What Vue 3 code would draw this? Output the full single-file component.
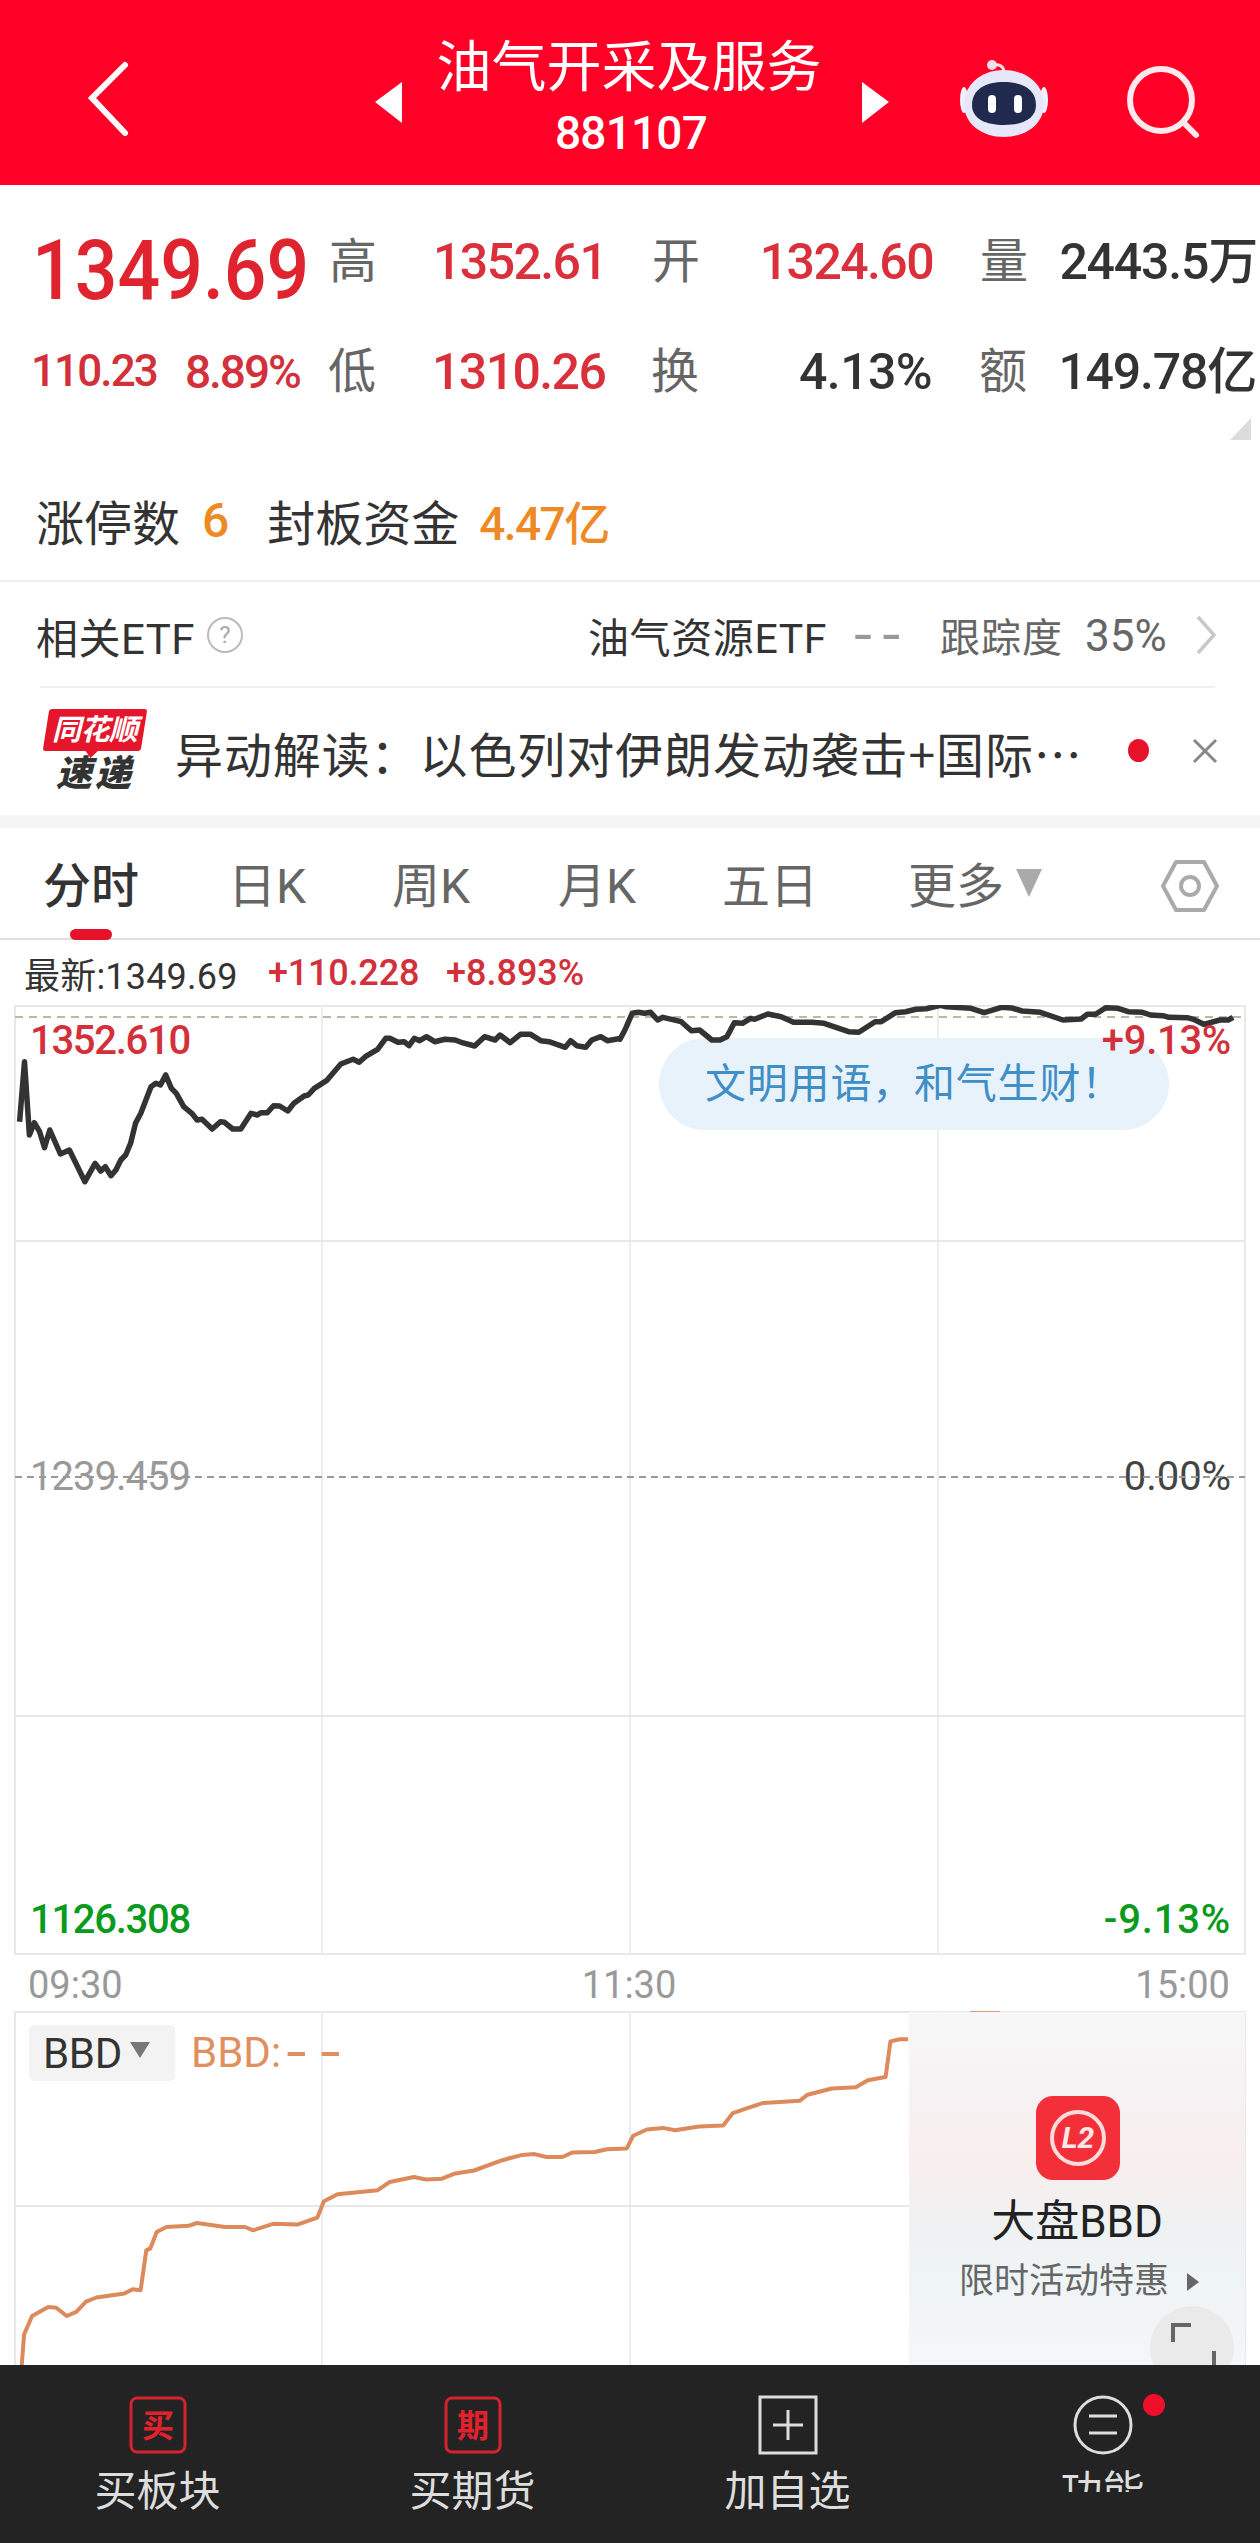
<script setup>
const z5 = [[48,395],[60,215],[72,435],[84,398],[97,425],[109,473],[122,420],[148,492],[170,480],[208,575],[233,520],[247,543],[258,530],[272,557],[284,540],[296,510],[308,495],[320,460],[332,400],[345,370],[370,290],[382,280],[393,285],[406,255],[420,295],[432,310],[450,350],[470,370],[483,390],[495,388],[520,417],[540,395],[550,397],[570,417],[590,417],[615,370],[630,375],[640,368],[655,368],[670,347],[685,348],[705,363],[720,340],[745,318],[755,315],[770,295],[800,272],[835,222],[865,208],[880,217],[895,200],[925,178],[945,145],[955,145],[975,157],[990,155],[1002,167],[1015,145],[1028,152],[1045,140],[1065,155],[1090,148],[1115,150],[1130,157],[1163,168],[1187,140],[1213,150],[1225,135],[1250,158],[1275,133],[1300,133],[1325,152],[1345,155],[1385,172],[1398,152],[1413,167],[1435,172],[1450,150],[1472,140],[1488,152],[1515,146]]
const z6 = [[0,178],[12,150],[30,100],[45,97],[60,100],[75,97],[92,120],[105,112],[150,125],[175,152],[195,150],[225,180],[245,180],[262,170],[280,128],[300,130],[320,115],[330,118],[362,102],[395,110],[425,127],[470,127],[500,130],[560,155],[585,157],[625,125],[640,125],[675,98],[700,95],[725,88],[750,86],[785,76],[800,80],[860,85],[892,98],[935,82],[960,84],[985,93],[1030,97],[1085,120],[1130,117],[1145,103],[1165,103],[1190,83],[1220,85],[1245,95],[1280,97],[1300,105],[1330,107],[1345,112],[1390,113],[1405,118],[1430,133],[1470,120],[1490,120],[1502,112]]
const z4 = [[27,1136],[30,1060],[40,1015],[60,993],[70,995],[83,1015],[95,1005],[107,980],[120,970],[155,960],[165,950],[175,952],[182,855],[187,850],[195,810],[207,798],[235,795],[245,788],[280,798],[305,798],[315,806],[340,790],[370,792],[395,775],[403,735],[420,718],[470,708],[485,688],[515,676],[530,682],[550,680],[565,668],[590,660],[625,635],[650,622],[665,620],[680,627],[700,627],[712,616],[740,615],[755,608],[780,606],[788,575],[805,560],[825,556],[840,562],[870,553],[900,550],[912,520],[930,508],[950,495],[995,490],[1005,475],[1035,460],[1065,457],[1080,440],[1102,432],[1108,345],[1120,340],[1130,340]]
const fmt = (x, y) => `${x.toFixed(1)},${y.toFixed(1)}`
const priceLine = [
  ...z5.map(([x, y]) => fmt(x / 2.45, 990 + y / 3)),
  ...z6.map(([x, y]) => fmt(620 + x / 2.45, 980 + y / 3)),
].join(' ')
const bbdLine = z4.map(([x, y]) => fmt(x / 1.2444, 1900 + y / 2.44)).join(' ')
const vLines = [322, 630, 938]
const hLines = [1241, 1716]
const tabs = [
  { label: '日K', w: 75, x: 228 },
  { label: '周K', w: 78, x: 392 },
  { label: '月K', w: 79, x: 558 },
  { label: '五日', w: 88, x: 722 },
]
</script>

<template>
  <div class="page">
    <header class="top">
      <svg class="back" width="44" height="78" viewBox="0 0 44 78"><path d="M38 5 L5 38 L38 73" fill="none" stroke="#fff" stroke-width="6" stroke-linecap="round" stroke-linejoin="miter"/></svg>
      <svg class="tri-l" width="28" height="42" viewBox="0 0 28 42"><path d="M27 0 L0 20 L27 41 Z" fill="#fff"/></svg>
      <div class="title">
        <div class="name">油气开采及服务</div>
        <div class="code">881107</div>
      </div>
      <svg class="tri-r" width="28" height="42" viewBox="0 0 28 42"><path d="M0 0 L27 20 L0 41 Z" fill="#fff"/></svg>
      <svg class="robot" width="88" height="80" viewBox="0 0 88 80">
        <path d="M44 14 C44 6 38 5 33 6" fill="none" stroke="#f6dfe6" stroke-width="3"/>
        <circle cx="32" cy="6" r="5" fill="#f4dde4"/>
        <ellipse cx="4" cy="41" rx="4" ry="13" fill="#eef0fb"/>
        <ellipse cx="84" cy="41" rx="4" ry="13" fill="#eef0fb"/>
        <path d="M44 11 C68 11 84 27 84 45 C84 65 66 78 44 78 C22 78 4 65 4 45 C4 27 20 11 44 11 Z" fill="#e6e8fa"/>
        <path d="M44 23 C62 23 76 30 76 46 C76 60 62 66 44 66 C26 66 12 60 12 46 C12 30 26 23 44 23 Z" fill="#1f2a4e"/>
        <rect x="28" y="36" width="8" height="18" rx="4" fill="#fff"/>
        <rect x="54" y="36" width="8" height="18" rx="4" fill="#fff"/>
      </svg>
      <svg class="search" width="76" height="80" viewBox="0 0 76 80"><circle cx="35" cy="35" r="31" fill="none" stroke="#ffe9ec" stroke-width="6"/><path d="M57 57 L70 70" stroke="#ffe9ec" stroke-width="6" stroke-linecap="round"/></svg>
    </header>

    <section class="stats">
      <div class="row r1">
        <div class="price"><span>1349.69</span></div>
        <div class="cell c1"><span class="lab">高</span><span class="val red">1352.61</span></div>
        <div class="cell c2"><span class="lab">开</span><span class="val red">1324.60</span></div>
        <div class="cell c3"><span class="lab">量</span><span class="val dark">2443.5万</span></div>
      </div>
      <div class="row r2">
        <div class="price-sub"><span>110.23</span><span>8.89%</span></div>
        <div class="cell c1"><span class="lab">低</span><span class="val red">1310.26</span></div>
        <div class="cell c2"><span class="lab">换</span><span class="val dark">4.13%</span></div>
        <div class="cell c3"><span class="lab">额</span><span class="val dark">149.78亿</span></div>
      </div>
      <svg class="corner" width="22" height="22" viewBox="0 0 22 22"><path d="M21 0 V22 H0 Z" fill="#dcdcdc"/></svg>
    </section>

    <section class="limit">
      <span class="l-lab">涨停数</span><span class="l-num n1">6</span>
      <span class="l-lab lb2">封板资金</span><span class="l-num n2">4.47亿</span>
    </section>

    <section class="etf">
      <span class="etf-lab">相关ETF</span>
      <span class="q">?</span>
      <span class="etf-name">油气资源ETF</span>
      <span class="etf-dash"><b>--</b></span>
      <span class="etf-track">跟踪度</span>
      <span class="etf-pct">35%</span>
      <svg class="etf-arrow" width="22" height="40" viewBox="0 0 22 40"><path d="M3 2 L19 20 L3 38" fill="none" stroke="#c8c8c8" stroke-width="3.5"/></svg>
    </section>

    <section class="news">
      <div class="logo">
        <div class="logo-top"><span>同花顺</span></div>
        <div class="logo-bot">速递</div>
      </div>
      <div class="news-text">异动解读：以色列对伊朗发动袭击+国际…</div>
      <span class="dot"></span>
      <svg class="close" width="28" height="28" viewBox="0 0 28 28"><path d="M3 3 L25 25 M25 3 L3 25" stroke="#888" stroke-width="3"/></svg>
    </section>

    <div class="band"></div>

    <nav class="tabs">
      <div class="tab active">分时<i class="bar"></i></div>
      <div v-for="t in tabs" :key="t.label" class="tab" :style="{ left: t.x + 'px' }">{{ t.label }}</div>
      <div class="tab more">更多<svg width="26" height="28" viewBox="0 0 26 28"><path d="M0 0 H26 L13 28 Z" fill="#aaa"/></svg></div>
      <svg class="hex" width="58" height="54" viewBox="0 0 58 54"><path d="M15 3 H43 L56 27 L43 51 H15 L2 27 Z" fill="none" stroke="#aaa" stroke-width="4" stroke-linejoin="round"/><circle cx="29" cy="27" r="9" fill="none" stroke="#aaa" stroke-width="4"/></svg>
    </nav>

    <div class="info">
      <span class="i-a">最新:1349.69</span>
      <span class="i-b">+110.228</span>
      <span class="i-c">+8.893%</span>
    </div>

    <div class="chart">
      <svg class="fill" width="1260" height="950" viewBox="0 1005 1260 950">
        <rect x="15" y="1006" width="1230" height="948" fill="none" stroke="#e8e8e8" stroke-width="2"/>
        <line v-for="x in vLines" :key="x" :x1="x" :x2="x" y1="1005" y2="1954" stroke="#ececec" stroke-width="2"/>
        <line v-for="y in hLines" :key="y" x1="15" x2="1245" :y1="y" :y2="y" stroke="#e8e8e8" stroke-width="2"/>
        <line x1="15" x2="1245" y1="1017" y2="1017" stroke="#bdb9a0" stroke-width="2" stroke-dasharray="8 6"/>
      </svg>
      <div class="pill">文明用语，和气生财！</div>
      <svg class="fill" width="1260" height="950" viewBox="0 1005 1260 950">
        <polyline :points="priceLine" fill="none" stroke="#333" stroke-width="5.5" stroke-linejoin="round"/>
      </svg>
      <span class="ax a1">1352.610</span>
      <span class="ax a2">+9.13%</span>
      <span class="ax a3">1239.459</span>
      <span class="ax a4">0.00%</span>
      <span class="ax a5">1126.308</span>
      <span class="ax a6">-9.13%</span>
      <svg class="fill" width="1260" height="950" viewBox="0 1005 1260 950">
        <line x1="15" x2="1245" y1="1477" y2="1477" stroke="#999" stroke-width="2" stroke-dasharray="7 5"/>
      </svg>
    </div>

    <div class="times"><span>09:30</span><span>11:30</span><span>15:00</span></div>

    <div class="bbd">
      <svg class="fill" width="1260" height="354" viewBox="0 2011 1260 354">
        <path d="M15 2365 V2012 H1245 V2365" fill="none" stroke="#e8e8e8" stroke-width="2"/>
        <line v-for="x in vLines" :key="x" :x1="x" :x2="x" y1="2011" y2="2365" stroke="#ececec" stroke-width="2"/>
        <line x1="15" x2="1245" y1="2206" y2="2206" stroke="#e8e8e8" stroke-width="2"/>
        <polyline :points="bbdLine" fill="none" stroke="#dc8a5c" stroke-width="4" stroke-linejoin="round"/>
        <line x1="970" x2="1000" y1="2011" y2="2011" stroke="#d9997a" stroke-width="2"/>
      </svg>
      <div class="chip"><span>BBD</span><svg width="20" height="16" viewBox="0 0 20 16"><path d="M0 0 H20 L10 16 Z" fill="#777"/></svg></div>
      <span class="bbd-val">BBD:<b>--</b></span>
      <div class="panel">
        <svg class="l2-icon" width="84" height="84" viewBox="0 0 84 84">
          <rect width="84" height="84" rx="17" fill="#f3303a"/>
          <circle cx="42" cy="42" r="26" fill="none" stroke="#fbdcdc" stroke-width="4"/>
          <text x="42" y="52" text-anchor="middle" font-family="Roboto, sans-serif" font-size="30" font-weight="700" font-style="italic" fill="#fde8e8">L2</text>
        </svg>
        <div class="p-title">大盘BBD</div>
        <div class="p-sub">限时活动特惠<svg width="12" height="18" viewBox="0 0 12 18"><path d="M0 0 L12 9 L0 18 Z" fill="#666"/></svg></div>
      </div>
      <div class="expand">
        <svg width="84" height="84" viewBox="0 0 84 84"><path d="M23 36 V19 H41 M64 45 V64 H44" fill="none" stroke="#666" stroke-width="4"/></svg>
      </div>
    </div>

    <footer class="bar-b">
      <div class="item">
        <svg width="60" height="60" viewBox="0 0 60 60"><rect x="3" y="3" width="54" height="54" rx="6" fill="none" stroke="#d5222e" stroke-width="3"/><text x="30" y="42" text-anchor="middle" font-size="32" font-weight="700" fill="#e3212e" font-family="'Noto Sans CJK SC', sans-serif">买</text></svg>
        <span>买板块</span>
      </div>
      <div class="item">
        <svg width="60" height="60" viewBox="0 0 60 60"><rect x="3" y="3" width="54" height="54" rx="6" fill="none" stroke="#d5222e" stroke-width="3"/><text x="30" y="42" text-anchor="middle" font-size="32" font-weight="700" fill="#e3212e" font-family="'Noto Sans CJK SC', sans-serif">期</text></svg>
        <span>买期货</span>
      </div>
      <div class="item">
        <svg width="60" height="60" viewBox="0 0 60 60"><rect x="2" y="2" width="56" height="56" fill="none" stroke="#ddd" stroke-width="3"/><path d="M30 15 V45 M15 30 H45" stroke="#ddd" stroke-width="3"/></svg>
        <span>加自选</span>
      </div>
      <div class="item last">
        <svg width="60" height="60" viewBox="0 0 60 60"><circle cx="30" cy="30" r="28" fill="none" stroke="#ddd" stroke-width="3"/><path d="M16 21 H44 M16 38 H44" stroke="#ddd" stroke-width="3"/></svg>
        <span>功能</span>
        <i class="reddot"></i>
        <i class="wm"></i>
      </div>
    </footer>
  </div>
</template>

<style>
html, body { margin: 0; background: #fff; }
</style>

<style scoped>
.page { width: 1260px; height: 2543px; overflow: hidden; background: #fff; font-family: Roboto, "Noto Sans CJK SC", sans-serif; color: #333; }
.top { height: 185px; background: #ff0026; display: flex; align-items: center; color: #fff; position: relative; }
.back { margin-left: 87px; margin-top: 13px; }
.tri-l { margin-left: 244px; margin-top: 21px; }
.title { width: 456px; text-align: center; }
.name { font-size: 55px; line-height: 64px; margin-top: 8px; margin-left: -4px; }
.code { font-size: 46px; line-height: 50px; margin-top: 9px; letter-spacing: -0.8px; font-weight: 500; }
.tri-r { margin-left: 3px; margin-top: 21px; }
.robot { margin-left: 70px; margin-top: 12px; }
.search { margin-left: 78px; margin-top: 25px; }

.stats { height: 275px; position: relative; padding: 42px 0 0 32px; box-sizing: border-box; }
.row { display: flex; align-items: center; height: 70px; }
.r2 { margin-top: 40px; }
.price { width: 298px; font-size: 84px; font-weight: 500; color: #e0242f; box-sizing: border-box; line-height: 70px; margin-top: 17px; white-space: nowrap; }
.price span { display: inline-block; transform: scaleX(0.895); transform-origin: left center; }
.price-sub { width: 298px; display: flex; gap: 28px; font-size: 44px; font-weight: 500; color: #d2303a; letter-spacing: -1.9px; margin-left: -1px; }
.price-sub span:last-child { font-size: 46px; letter-spacing: -2px; }
.cell { display: flex; align-items: center; }
.c1 { width: 322px; margin-left: -1px; }
.c2 { width: 281px; justify-content: space-between; margin-right: 47px; margin-left: 1px; }
.c3 { width: 277px; justify-content: space-between; }
.lab { font-size: 48px; color: #666; line-height: 70px; }
.val { font-size: 50px; font-weight: 500; letter-spacing: -1.6px; line-height: 70px; white-space: nowrap; }
.c1 .val { margin-left: 56px; }
.c2 .dark { letter-spacing: -0.6px; }
.c3 .val { letter-spacing: -1.2px; }
.red { color: #d9303b; }
.dark { color: #333; }
.corner { position: absolute; right: 8px; top: 233px; }

.limit { height: 122px; box-sizing: border-box; padding: 0 0 0 36px; display: flex; align-items: center; font-size: 48px; border-bottom: 2px solid #eee; }
.n1, .n2 { color: #ee8a25; font-weight: 500; }
.n1 { margin-left: 22px; }
.lb2 { margin-left: 38px; }
.n2 { margin-left: 20px; font-size: 46px; letter-spacing: -1.6px; }

.etf { height: 106px; display: flex; align-items: center; font-size: 40px; padding-left: 36px; box-sizing: border-box; position: relative; }
.etf::after { content: ""; position: absolute; left: 40px; right: 45px; bottom: 0; height: 2px; background: #efefef; }
.etf-lab { width: 171px; font-size: 42px; letter-spacing: 0.5px; white-space: nowrap; }
.q { width: 32px; height: 32px; border: 2px solid #bbb; border-radius: 50%; color: #aaa; font-size: 24px; text-align: center; line-height: 32px; }
.etf-name { margin-left: 345px; width: 265px; font-size: 41px; letter-spacing: 0.6px; white-space: nowrap; }
.etf-dash { width: 87px; color: #999; font-size: 44px; }
.etf-dash b { display: inline-block; font-weight: 500; letter-spacing: 6px; transform: scaleX(1.35); transform-origin: left center; }
.etf-track { width: 145px; color: #666; letter-spacing: 1px; }
.etf-pct { width: 110px; color: #666; font-size: 44px; margin-top: 2px; }

.news { height: 127px; display: flex; align-items: center; padding-left: 46px; box-sizing: border-box; position: relative; }
.logo { width: 98px; height: 86px; margin-top: 0; text-align: center; }
.logo-top { height: 42px; background: #e5152b; transform: skewX(-9deg); border-radius: 3px; color: #fff; font-size: 29px; font-weight: 700; font-style: italic; line-height: 42px; position: relative; letter-spacing: -0.5px; }
.logo-top::after { content: ""; position: absolute; left: 42px; bottom: -7px; border-left: 7px solid transparent; border-right: 7px solid transparent; border-top: 8px solid #e5152b; }
.logo-top span { display: inline-block; transform: skewX(9deg); }
.logo-bot { font-size: 36px; line-height: 44px; font-weight: 900; font-style: italic; color: #333; letter-spacing: 3px; margin-top: 1px; }
.news-text { margin-left: 32px; width: 920px; font-family: "Noto Sans CJK SC", sans-serif; font-size: 48px; letter-spacing: 0.9px; white-space: nowrap; line-height: 60px; margin-left: 31px; }
.dot { position: absolute; left: 1128px; top: 51px; width: 21px; height: 23px; border-radius: 50%; background: #e8112a; }
.close { position: absolute; left: 1191px; top: 49px; }

.band { height: 13px; background: #f5f5f5; }

.tabs { height: 112px; position: relative; border-bottom: 2px solid #e0e0e0; box-sizing: border-box; font-size: 48px; color: #666; }
.tab { position: absolute; top: 27px; line-height: 64px; white-space: nowrap; }
.tab.active { left: 43px; color: #333; font-weight: 500; }
.bar { position: absolute; left: 27px; top: 74px; width: 42px; height: 11px; border-radius: 6px; background: #e8112a; }
.more { left: 908px; display: flex; align-items: center; gap: 12px; }
.more svg { margin-top: -8px; }
.hex { position: absolute; left: 1161px; top: 31px; }

.info { height: 65px; display: flex; align-items: center; padding-left: 24px; box-sizing: border-box; font-size: 36px; }
.i-a { width: 244px; color: #333; letter-spacing: 0.2px; white-space: nowrap; }
.i-b { width: 178px; color: #d2303a; font-weight: 500; letter-spacing: -0.2px; }
.i-c { color: #d2303a; font-weight: 500; }

.chart { height: 950px; position: relative; }
.fill { position: absolute; left: 0; top: 0; }
.pill { position: absolute; left: 659px; top: 33px; width: 510px; height: 92px; border-radius: 46px; background: #e8f2fb; color: #3f8fc6; font-size: 41px; line-height: 92px; box-sizing: border-box; padding-left: 46px; letter-spacing: 0.8px; white-space: nowrap; }
.ax { position: absolute; font-size: 40px; line-height: 46px; font-weight: 500; white-space: nowrap; }
.a1 { left: 30px; top: 13px; color: #d2303a; letter-spacing: -1.3px; }
.a2 { right: 29px; top: 13px; color: #d2303a; letter-spacing: -0.3px; }
.a3 { left: 30px; top: 449px; color: #999; font-weight: 400; letter-spacing: -1px; }
.a4 { right: 29px; top: 449px; color: #444; font-weight: 400; }
.a5 { left: 30px; top: 892px; color: #0a9a1e; letter-spacing: -1.3px; }
.a6 { right: 29px; top: 892px; color: #0a9a1e; letter-spacing: 0.8px; }

.times { height: 56px; display: flex; justify-content: space-between; align-items: center; padding: 4px 30px 0 28px; box-sizing: border-box; font-size: 38px; color: #999; }

.bbd { height: 354px; position: relative; }
.chip { position: absolute; left: 29px; top: 14px; width: 146px; height: 56px; background: #f3f3f3; border-radius: 5px; display: flex; align-items: center; gap: 8px; padding-left: 14px; box-sizing: border-box; font-size: 42px; letter-spacing: -0.3px; }
.chip svg { margin-top: -6px; }
.bbd-val { position: absolute; left: 191px; top: 16px; font-size: 42px; line-height: 52px; color: #e0905f; white-space: nowrap; }
.bbd-val b { display: inline-block; font-weight: 500; letter-spacing: 7px; margin-left: 4px; transform: scaleX(1.6); transform-origin: left center; }
.panel { position: absolute; left: 909px; top: 1px; width: 336px; height: 353px; display: flex; flex-direction: column; align-items: center; background: linear-gradient(180deg, #f7f7f8 0%, #f6f1f2 25%, #f9eeee 42%, #eef2f2 62%, #eff4f6 78%, #f5f6f7 100%); }
.l2-icon { margin-top: 84px; margin-left: 1px; }
.p-title { font-size: 44px; line-height: 52px; margin-top: 16px; color: #222; }
.p-sub { font-size: 35px; line-height: 44px; margin-top: 12px; color: #666; display: flex; align-items: center; gap: 18px; margin-left: 4px; white-space: nowrap; }
.expand { position: absolute; left: 1150px; top: 295px; width: 84px; height: 84px; border-radius: 50%; background: #eaeaea; }

.bar-b { height: 178px; background: #232323; display: flex; position: relative; z-index: 1; }
.item { width: 315px; display: flex; flex-direction: column; align-items: center; padding-top: 30px; box-sizing: border-box; font-size: 42px; color: #ddd; position: relative; }
.item span { line-height: 56px; margin-top: 9px; }
.reddot { position: absolute; left: 198px; top: 29px; width: 22px; height: 22px; border-radius: 50%; background: #f00f2a; }
.wm { position: absolute; left: 100px; top: 127px; width: 215px; height: 51px; background: #232323; }
</style>
